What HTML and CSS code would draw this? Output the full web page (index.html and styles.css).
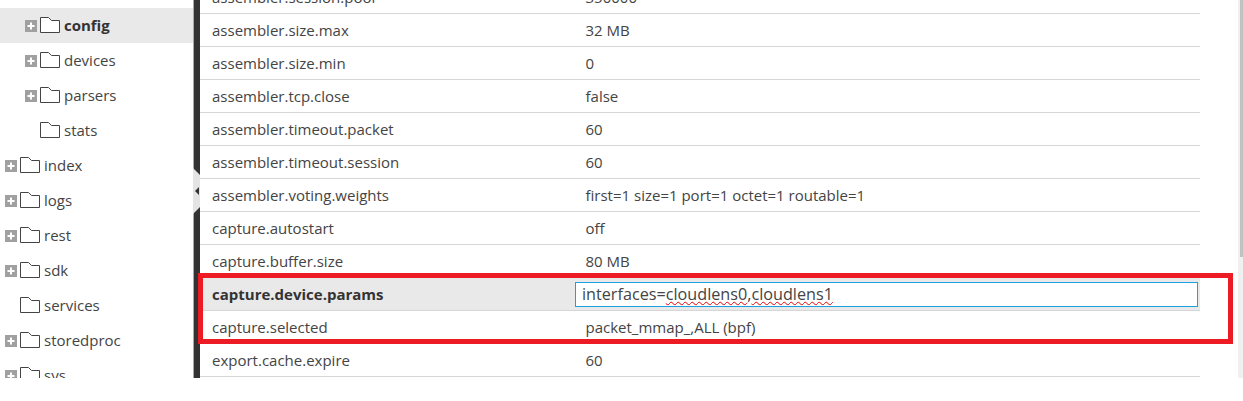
FILE: index.html
```html
<!DOCTYPE html>
<html lang="en">
<head>
<meta charset="UTF-8">
<title>Config</title>
<link rel="stylesheet" href="styles.css">
</head>
<body>

<svg class="defs" width="0" height="0">
  <symbol id="folder" viewBox="0 0 20 17">
    <path d="M.5 16.5V1.5h8l3 3h8v12z" fill="#fff" stroke="#444"/>
  </symbol>
  <symbol id="plus" viewBox="0 0 12 12">
    <rect width="12" height="12" fill="#a0a0a0"/>
    <path d="M2.5 6h7M6 2.5v7" stroke="#fff" stroke-width="2"/>
  </symbol>
</svg>

<div class="page">
  <div class="side">
    <ul class="tree">
      <li class="item sub active"><svg class="plus"><use href="#plus"/></svg><svg class="folder"><use href="#folder"/></svg>config</li>
      <li class="item sub"><svg class="plus"><use href="#plus"/></svg><svg class="folder"><use href="#folder"/></svg>devices</li>
      <li class="item sub"><svg class="plus"><use href="#plus"/></svg><svg class="folder"><use href="#folder"/></svg>parsers</li>
      <li class="item sub leaf"><svg class="folder"><use href="#folder"/></svg>stats</li>
      <li class="item"><svg class="plus"><use href="#plus"/></svg><svg class="folder"><use href="#folder"/></svg>index</li>
      <li class="item"><svg class="plus"><use href="#plus"/></svg><svg class="folder"><use href="#folder"/></svg>logs</li>
      <li class="item"><svg class="plus"><use href="#plus"/></svg><svg class="folder"><use href="#folder"/></svg>rest</li>
      <li class="item"><svg class="plus"><use href="#plus"/></svg><svg class="folder"><use href="#folder"/></svg>sdk</li>
      <li class="item leaf"><svg class="folder"><use href="#folder"/></svg>services</li>
      <li class="item"><svg class="plus"><use href="#plus"/></svg><svg class="folder"><use href="#folder"/></svg>storedproc</li>
      <li class="item"><svg class="plus"><use href="#plus"/></svg><svg class="folder"><use href="#folder"/></svg>sys</li>
    </ul>
  </div>

  <div class="divider"><div class="handle"></div></div>

  <div class="content">
    <div class="rows">
      <div class="row"><div class="name">assembler.session.pool</div><div class="val">350000</div></div>
      <div class="row"><div class="name">assembler.size.max</div><div class="val">32 MB</div></div>
      <div class="row"><div class="name">assembler.size.min</div><div class="val">0</div></div>
      <div class="row"><div class="name">assembler.tcp.close</div><div class="val">false</div></div>
      <div class="row"><div class="name">assembler.timeout.packet</div><div class="val">60</div></div>
      <div class="row"><div class="name">assembler.timeout.session</div><div class="val">60</div></div>
      <div class="row"><div class="name">assembler.voting.weights</div><div class="val">first=1 size=1 port=1 octet=1 routable=1</div></div>
      <div class="row"><div class="name">capture.autostart</div><div class="val">off</div></div>
      <div class="row"><div class="name">capture.buffer.size</div><div class="val">80 MB</div></div>
      <div class="row editing">
        <div class="name">capture.device.params</div>
        <div class="edit">interfaces=<span class="typo">cloudlens0</span>,<span class="typo">cloudlens1</span></div>
      </div>
      <div class="row"><div class="name">capture.selected</div><div class="val">packet_mmap_,ALL (bpf)</div></div>
      <div class="row"><div class="name">export.cache.expire</div><div class="val">60</div></div>
    </div>
  </div>

  <div class="scrollbar"><div class="thumb"></div></div>
  <div class="callout"></div>
</div>

</body>
</html>
```

FILE: styles.css
```css
*{
  margin: 0;
  padding: 0;
  box-sizing: border-box;
  list-style: none;
}
body{
  background: #fff;
  font-family: "Open Sans", "Liberation Sans", sans-serif;
  font-size: 15px;
  color: #444;
}
.defs{
  position: absolute;
}
.page{
  display: flex;
  height: 378px;
  overflow: hidden;
  position: relative;
}
.side{
  width: 194px;
  flex: none;
  padding-top: 8px;
}
.item{
  display: flex;
  align-items: center;
  height: 35px;
  padding-left: 5px;
  padding-bottom: 2px;
}
.item.sub{
  padding-left: 25px;
}
.item.leaf{
  padding-left: 20px;
}
.item.sub.leaf{
  padding-left: 40px;
}
.item.active{
  background: #e9e9e9;
  font-weight: bold;
  color: #333;
}
.plus{
  width: 12px;
  height: 12px;
  margin-right: 3px;
  margin-top: 2px;
  flex: none;
}
.folder{
  width: 20px;
  height: 17px;
  margin-right: 4px;
  flex: none;
}
.divider{
  width: 6px;
  flex: none;
  background: #333;
  position: relative;
  box-shadow: -1px 0 0 #aaa;
}
.handle{
  width: 7px;
  height: 46px;
  background: #e4e4e4;
  position: absolute;
  left: -1px;
  top: 168px;
  clip-path: polygon(0 0, 100% 7px, 100% calc(100% - 7px), 0 100%);
}
.handle:after{
  content: "";
  position: absolute;
  left: 2px;
  top: 19px;
  border-right: 4px solid #333;
  border-top: 4px solid transparent;
  border-bottom: 4px solid transparent;
}
.content{
  width: 1000px;
  flex: none;
}
.rows{
  margin-top: -19px;
}
.row{
  display: flex;
  align-items: center;
  height: 33px;
  border-bottom: 1px solid #d6d6d6;
  padding-left: 12px;
}
.name{
  width: 373.5px;
  flex: none;
}
.val{
  flex: 1;
}
.row.editing{
  background: #e9e9e9;
}
.row.editing .name{
  width: 363px;
  font-weight: bold;
  color: #333;
}
.edit{
  width: 623px;
  height: 25px;
  line-height: 23px;
  background: #fff;
  border: 1px solid #1ba1e2;
  padding-left: 6px;
  font-size: 16.2px;
  color: #444;
}
.typo{
  text-decoration: underline wavy #e60000 1px;
  text-underline-offset: 1px;
  text-decoration-skip-ink: none;
}
.scrollbar{
  width: 5px;
  background: #f0f0f0;
  margin-left: 38px;
  flex: none;
  position: relative;
}
.thumb{
  position: absolute;
  right: 0;
  top: 0;
  width: 3px;
  height: 257px;
  background: #c1c1c1;
}
.callout{
  position: absolute;
  left: 198px;
  top: 273px;
  width: 1035px;
  height: 71px;
  border: 5px solid #ed1c24;
}
```
